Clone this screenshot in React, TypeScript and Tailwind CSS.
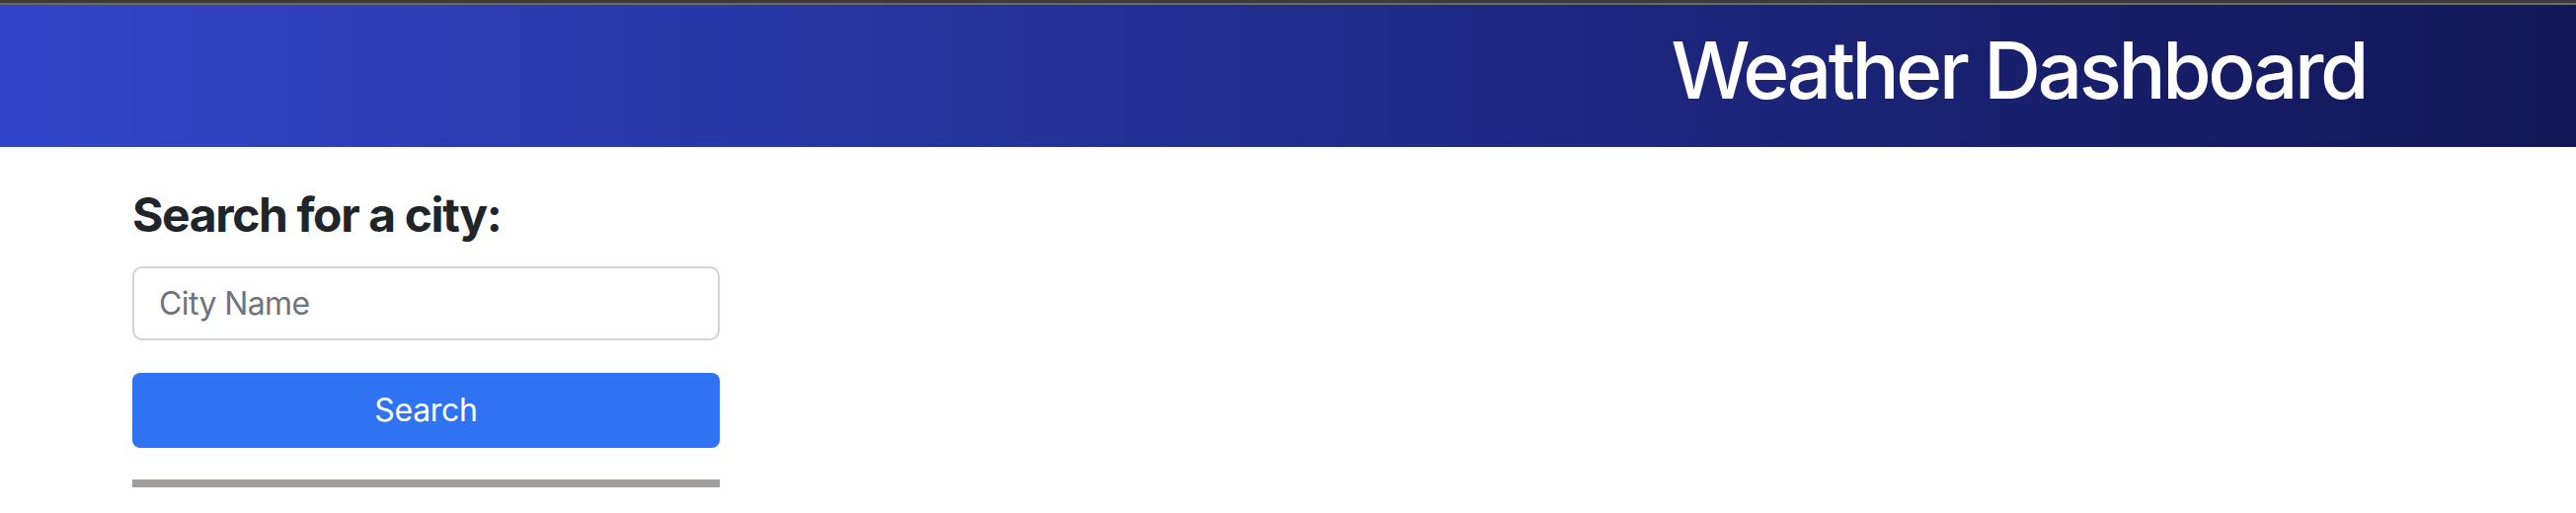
import { useState } from 'react';

export default function App() {
  const [city, setCity] = useState('');

  return (
    <div className="min-h-[520px] bg-white font-['Inter',sans-serif]">
      <div className="h-[3px] bg-[#3b3b3b]" />
      <div className="h-[2px] bg-[#6b6b6b]" />
      <header className="flex h-[144px] items-start justify-end bg-linear-to-r from-[#3444c9] to-[#111756] pr-[213px] pt-[26px]">
        <h1 className="text-[80px] font-medium leading-none tracking-[-3.4px] text-white">Weather Dashboard</h1>
      </header>
      <main className="pl-[134px] pt-[40px]">
        <div className="w-[595px]">
          <h2 className="text-[48px] font-bold leading-[1.2] tracking-[-1.4px] text-[#212529]">Search for a city:</h2>
          <input
            type="text"
            value={city}
            onChange={e => setCity(e.target.value)}
            placeholder="City Name"
            className="mt-[23px] block h-[75px] w-full rounded-[10px] border-2 border-[#ced4da] px-[25px] text-[32px] tracking-[-0.6px] text-[#212529] outline-none placeholder:text-[#6c757d]"
          />
          <button className="mt-[33px] block h-[76px] w-full rounded-[8px] bg-[#2f73f2] text-[32px] tracking-[-0.3px] text-white">
            Search
          </button>
          <div className="mt-[32px] h-[8px] bg-[#9f9e9d]" />
        </div>
      </main>
    </div>
  );
}
